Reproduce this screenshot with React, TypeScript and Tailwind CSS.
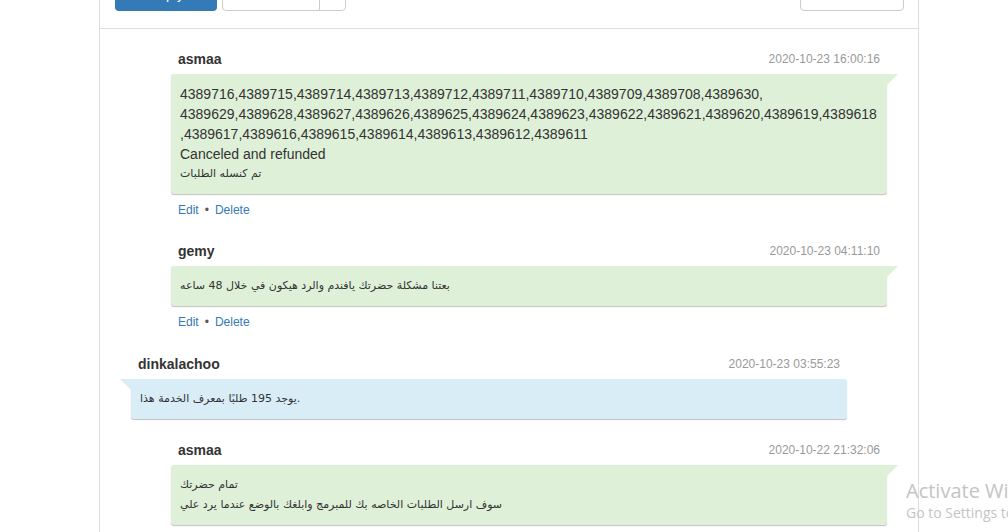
import React from "react";

type Msg = {
  author: string;
  date: string;
  side: "agent" | "client";
  lines: { text: string; ar?: boolean }[];
  actions?: boolean;
};

const messages: Msg[] = [
  {
    author: "asmaa",
    date: "2020-10-23 16:00:16",
    side: "agent",
    actions: true,
    lines: [
      { text: "4389716,4389715,4389714,4389713,4389712,4389711,4389710,4389709,4389708,4389630," },
      { text: "4389629,4389628,4389627,4389626,4389625,4389624,4389623,4389622,4389621,4389620,4389619,4389618" },
      { text: ",4389617,4389616,4389615,4389614,4389613,4389612,4389611" },
      { text: "Canceled and refunded" },
      { text: "تم كنسله الطلبات", ar: true },
    ],
  },
  {
    author: "gemy",
    date: "2020-10-23 04:11:10",
    side: "agent",
    actions: true,
    lines: [{ text: "بعتنا مشكلة حضرتك يافندم والرد هيكون في خلال 48 ساعه", ar: true }],
  },
  {
    author: "dinkalachoo",
    date: "2020-10-23 03:55:23",
    side: "client",
    lines: [{ text: "يوجد 195 طلبًا بمعرف الخدمة هذا.", ar: true }],
  },
  {
    author: "asmaa",
    date: "2020-10-22 21:32:06",
    side: "agent",
    lines: [
      { text: "تمام حضرتك", ar: true },
      { text: "سوف ارسل الطلبات الخاصه بك للمبرمج وابلغك بالوضع عندما يرد علي", ar: true },
    ],
  },
];

function Bubble({ m }: { m: Msg }) {
  const agent = m.side === "agent";
  return (
    <div className={agent ? "ml-10" : "mr-10"}>
      <div className="flex h-5 items-center justify-between px-[7px] mb-[5px]">
        <span className="text-[14px] font-bold text-[#333]">{m.author}</span>
        <span className="text-[12px] text-[#999]">{m.date}</span>
      </div>
      <div
        className={
          "relative py-[10px] pl-[9px] pr-[10px] text-[14px] leading-5 text-[#333] shadow-[0_1px_1px_rgba(0,0,0,0.25)] " +
          (agent
            ? "bg-[#dff0d8] rounded-[3px] rounded-tr-none"
            : "bg-[#d9edf7] rounded-[3px] rounded-tl-none")
        }
      >
        {agent ? (
          <span className="absolute top-0 -right-[11px] h-[11px] w-[11px] bg-[#dff0d8] [clip-path:polygon(0_0,100%_0,0_100%)]" />
        ) : (
          <span className="absolute top-0 -left-[11px] h-[11px] w-[11px] bg-[#d9edf7] [clip-path:polygon(0_0,100%_0,100%_100%)]" />
        )}
        {m.lines.map((l, i) => (
          <div
            key={i}
            className={
              "whitespace-nowrap " +
              (l.ar ? "text-[11px] [font-family:'DejaVu_Sans',sans-serif]" : "")
            }
          >
            {l.text}
          </div>
        ))}
      </div>
      {m.actions ? (
        <div className="mt-[7px] flex h-[18px] items-center px-[7px] text-[12px]">
          <a className="text-[#337ab7]" href="#">Edit</a>
          <span className="mx-[6px] text-[#555]">•</span>
          <a className="text-[#337ab7]" href="#">Delete</a>
        </div>
      ) : null}
    </div>
  );
}

export default function App() {
  return (
    <div className="relative h-[532px] w-[1008px] overflow-hidden bg-white [font-family:'Liberation_Sans',Arial,sans-serif]">
      <div className="ml-[99px] h-full w-[820px] border-x border-[#ddd]">
        {/* toolbar */}
        <div className="flex h-[29px] items-start border-b border-[#ddd] pl-[15px] pr-[14px]">
          <button className="-mt-[23px] h-[34px] w-[102px] rounded-[4px] bg-[#337ab7] text-[14px] text-white">
            Reply
          </button>
          <div className="-mt-[23px] ml-[5px] flex h-[34px] w-[124px] rounded-[4px] border border-[#ccc] bg-white">
            <div className="w-[97px] border-r border-[#ccc]" />
            <div className="flex-1" />
          </div>
          <div className="flex-1" />
          <div className="-mt-[23px] h-[34px] w-[104px] rounded-[4px] border border-[#ccc] bg-white" />
        </div>

        {/* conversation */}
        <div className="flex flex-col px-[31px] pt-5">
          <div className="mb-[22px]">
            <Bubble m={messages[0]} />
          </div>
          <div className="mb-[23px]">
            <Bubble m={messages[1]} />
          </div>
          <div className="mb-[21px]">
            <Bubble m={messages[2]} />
          </div>
          <div>
            <Bubble m={messages[3]} />
          </div>
        </div>
      </div>

      {/* system watermark */}
      <div className="pointer-events-none absolute left-[906px] top-[478px] whitespace-nowrap text-[#c4c4c4] [font-family:'Open_Sans',sans-serif]">
        <div className="text-[20px] leading-[26px]">Activate Windows</div>
        <div className="text-[14px] leading-[18px]">Go to Settings to activate Windows.</div>
      </div>
    </div>
  );
}
